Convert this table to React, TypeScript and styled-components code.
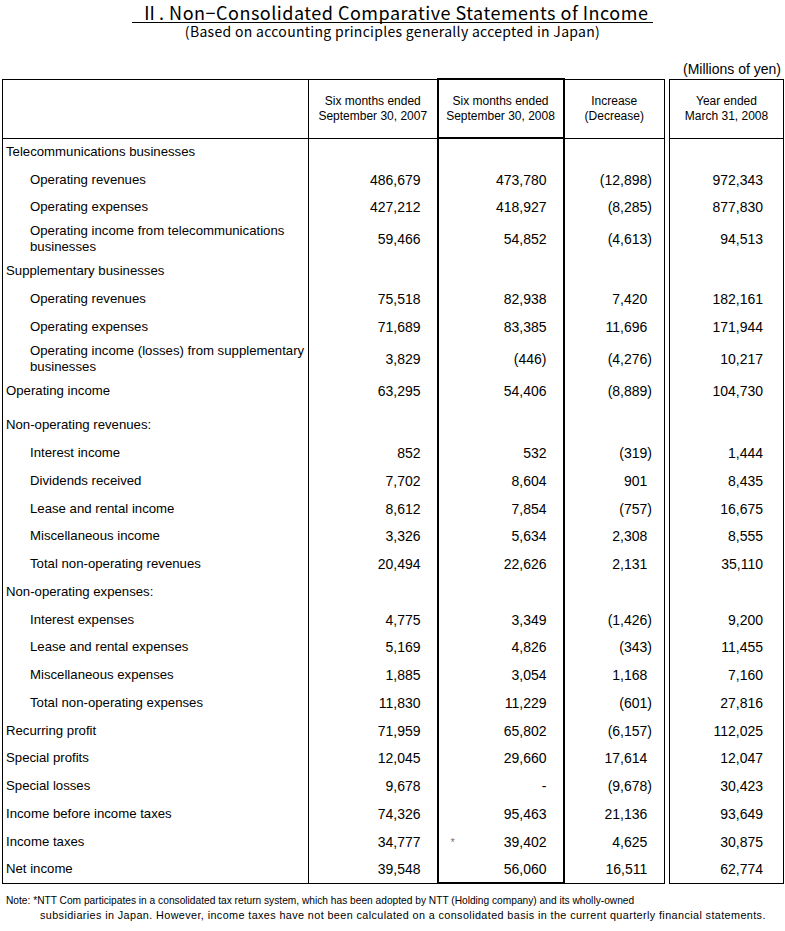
import styled, { createGlobalStyle } from "styled-components";

type Row = {
  label: string[];
  indent?: boolean;
  values?: [string, string, string, string];
  star?: boolean;
  gapAfter?: boolean;
};

const rows: Row[] = [
  { label: ["Telecommunications businesses"] },
  { label: ["Operating revenues"], indent: true, values: ["486,679", "473,780", "(12,898)", "972,343"] },
  { label: ["Operating expenses"], indent: true, values: ["427,212", "418,927", "(8,285)", "877,830"] },
  {
    label: ["Operating income from telecommunications", "businesses"],
    indent: true,
    values: ["59,466", "54,852", "(4,613)", "94,513"],
  },
  { label: ["Supplementary businesses"] },
  { label: ["Operating revenues"], indent: true, values: ["75,518", "82,938", "7,420", "182,161"] },
  { label: ["Operating expenses"], indent: true, values: ["71,689", "83,385", "11,696", "171,944"] },
  {
    label: ["Operating income (losses) from supplementary", "businesses"],
    indent: true,
    values: ["3,829", "(446)", "(4,276)", "10,217"],
  },
  { label: ["Operating income"], values: ["63,295", "54,406", "(8,889)", "104,730"], gapAfter: true },
  { label: ["Non-operating revenues:"] },
  { label: ["Interest income"], indent: true, values: ["852", "532", "(319)", "1,444"] },
  { label: ["Dividends received"], indent: true, values: ["7,702", "8,604", "901", "8,435"] },
  { label: ["Lease and rental income"], indent: true, values: ["8,612", "7,854", "(757)", "16,675"] },
  { label: ["Miscellaneous income"], indent: true, values: ["3,326", "5,634", "2,308", "8,555"] },
  { label: ["Total non-operating revenues"], indent: true, values: ["20,494", "22,626", "2,131", "35,110"] },
  { label: ["Non-operating expenses:"] },
  { label: ["Interest expenses"], indent: true, values: ["4,775", "3,349", "(1,426)", "9,200"] },
  { label: ["Lease and rental expenses"], indent: true, values: ["5,169", "4,826", "(343)", "11,455"] },
  { label: ["Miscellaneous expenses"], indent: true, values: ["1,885", "3,054", "1,168", "7,160"] },
  { label: ["Total non-operating expenses"], indent: true, values: ["11,830", "11,229", "(601)", "27,816"] },
  { label: ["Recurring profit"], values: ["71,959", "65,802", "(6,157)", "112,025"] },
  { label: ["Special profits"], values: ["12,045", "29,660", "17,614", "12,047"] },
  { label: ["Special losses"], values: ["9,678", "-", "(9,678)", "30,423"] },
  { label: ["Income before income taxes"], values: ["74,326", "95,463", "21,136", "93,649"] },
  { label: ["Income taxes"], values: ["34,777", "39,402", "4,625", "30,875"], star: true },
  { label: ["Net income"], values: ["39,548", "56,060", "16,511", "62,774"] },
];

function rowHeight(row: Row) {
  if (row.label.length > 1) return 36;
  if (row.gapAfter) return 35;
  return 27.75;
}

// accounting style: positive figures leave room for the closing paren
function Figure({ value }: { value: string }) {
  if (value.endsWith(")")) return <>{value}</>;
  return (
    <>
      {value}
      <Ghost>)</Ghost>
    </>
  );
}

function App() {
  const last = rows.length - 1;
  return (
    <>
      <GlobalStyle />
      <Page>
        <TitleBlock>
          <Title>&nbsp;Ⅱ. Non−Consolidated Comparative Statements of Income&nbsp;</Title>
          <Subtitle>(Based on accounting principles generally accepted in Japan)</Subtitle>
        </TitleBlock>
        <Units>(Millions of yen)</Units>
        <Table>
          <colgroup>
            <col style={{ width: 306 }} />
            <col style={{ width: 129 }} />
            <col style={{ width: 126 }} />
            <col style={{ width: 101 }} />
            <col style={{ width: 5 }} />
            <col style={{ width: 114 }} />
          </colgroup>
          <thead>
            <HeadRow>
              <HeadCell />
              <HeadCell>
                Six months ended
                <br />
                September 30, 2007
              </HeadCell>
              <HeadCell $thick>
                Six months ended
                <br />
                September 30, 2008
              </HeadCell>
              <HeadCell>
                Increase
                <br />
                (Decrease)
              </HeadCell>
              <Spacer />
              <HeadCell>
                Year ended
                <br />
                March 31, 2008
              </HeadCell>
            </HeadRow>
          </thead>
          <tbody>
            {rows.map((row, i) => {
              const v = row.values;
              const end = i === last;
              return (
                <BodyRow key={i} $h={rowHeight(row)}>
                  <LabelCell $indent={row.indent} $gap={row.gapAfter} $last={end}>
                    {row.label.map((line, j) => (
                      <LabelLine key={j}>{line}</LabelLine>
                    ))}
                  </LabelCell>
                  <NumCell $pad={16} $gap={row.gapAfter} $last={end}>
                    {v?.[0]}
                  </NumCell>
                  <NumCell $pad={16} $gap={row.gapAfter} $last={end} $thick>
                    {row.star ? (
                      <Split>
                        <Star>*</Star>
                        <span>{v?.[1]}</span>
                      </Split>
                    ) : (
                      v?.[1]
                    )}
                  </NumCell>
                  <NumCell $pad={12} $gap={row.gapAfter} $last={end}>
                    {v && <Figure value={v[2]} />}
                  </NumCell>
                  <Spacer />
                  <NumCell $pad={20} $gap={row.gapAfter} $last={end}>
                    {v?.[3]}
                  </NumCell>
                </BodyRow>
              );
            })}
          </tbody>
        </Table>
        <Note>
          <NoteLine>
            Note: *NTT Com participates in a consolidated tax return system, which has been adopted by NTT (Holding
            company) and its wholly-owned
          </NoteLine>
          <NoteLine $indent>
            subsidiaries in Japan. However, income taxes have not been calculated on a consolidated basis in the current
            quarterly financial statements.
          </NoteLine>
        </Note>
      </Page>
    </>
  );
}

export default App;

const GlobalStyle = createGlobalStyle`
  html, body {
    margin: 0;
    padding: 0;
    background: #ffffff;
  }
  body {
    font-family: "Liberation Sans", Arial, sans-serif;
    color: #000000;
  }
`;

const Page = styled.div`
  width: 785px;
  padding-top: 2px;
`;

const TitleBlock = styled.div`
  display: flex;
  flex-direction: column;
  align-items: center;
`;

const Title = styled.div`
  font-family: "Noto Sans CJK JP", "Liberation Sans", sans-serif;
  font-size: 18px;
  line-height: 20px;
  letter-spacing: 0.5px;
  white-space: pre;
  border-bottom: 1.5px solid #000;
  padding-left: 4px;
`;

const Subtitle = styled.div`
  font-family: "Noto Sans CJK JP", "Liberation Sans", sans-serif;
  font-size: 14px;
  line-height: 16px;
  letter-spacing: 0.3px;
`;

const Units = styled.div`
  font-size: 14px;
  line-height: 16px;
  text-align: right;
  padding-right: 4px;
  margin-top: 22px;
  margin-bottom: 1px;
`;

const Table = styled.table`
  width: 781px;
  margin-left: 2px;
  table-layout: fixed;
  border-collapse: collapse;
  border-spacing: 0;
  font-size: 14px;
`;

const HeadRow = styled.tr`
  height: 59px;
`;

const HeadCell = styled.th<{ $thick?: boolean }>`
  font-weight: normal;
  font-size: 12px;
  line-height: 15px;
  text-align: center;
  vertical-align: middle;
  padding: 0;
  border: ${(p) => (p.$thick ? "2px" : "1px")} solid #000;
`;

const Spacer = styled.td`
  padding: 0;
  border: none;
`;

const BodyRow = styled.tr<{ $h: number }>`
  height: ${(p) => p.$h}px;
`;

const LabelCell = styled.td<{ $indent?: boolean; $gap?: boolean; $last?: boolean }>`
  padding: 0 0 ${(p) => (p.$gap ? 7 : 0)}px ${(p) => (p.$indent ? 27 : 3)}px;
  border-left: 1px solid #000;
  border-right: 1px solid #000;
  border-bottom: ${(p) => (p.$last ? "1px solid #000" : "none")};
  vertical-align: middle;
  font-size: 13.2px;
  line-height: 16px;
`;

const LabelLine = styled.div`
  white-space: nowrap;
`;

const NumCell = styled.td<{ $pad: number; $thick?: boolean; $gap?: boolean; $last?: boolean }>`
  padding: 0 ${(p) => p.$pad}px ${(p) => (p.$gap ? 7 : 0)}px 0;
  text-align: right;
  vertical-align: middle;
  white-space: nowrap;
  border-left: ${(p) => (p.$thick ? "2px" : "1px")} solid #000;
  border-right: ${(p) => (p.$thick ? "2px" : "1px")} solid #000;
  border-bottom: ${(p) => (p.$last ? `${p.$thick ? 2 : 1}px solid #000` : "none")};
`;

const Ghost = styled.span`
  visibility: hidden;
`;

const Split = styled.div`
  display: flex;
  justify-content: space-between;
  align-items: center;
  padding-left: 12px;
`;

const Star = styled.span`
  color: #777;
  font-size: 11px;
`;

const Note = styled.div`
  margin-top: 10px;
  line-height: 14px;
  padding-left: 6px;
`;

const NoteLine = styled.div<{ $indent?: boolean }>`
  white-space: nowrap;
  font-size: ${(p) => (p.$indent ? 10.8 : 10.2)}px;
  letter-spacing: ${(p) => (p.$indent ? 0.4 : 0)}px;
  padding-left: ${(p) => (p.$indent ? 34 : 0)}px;
`;
